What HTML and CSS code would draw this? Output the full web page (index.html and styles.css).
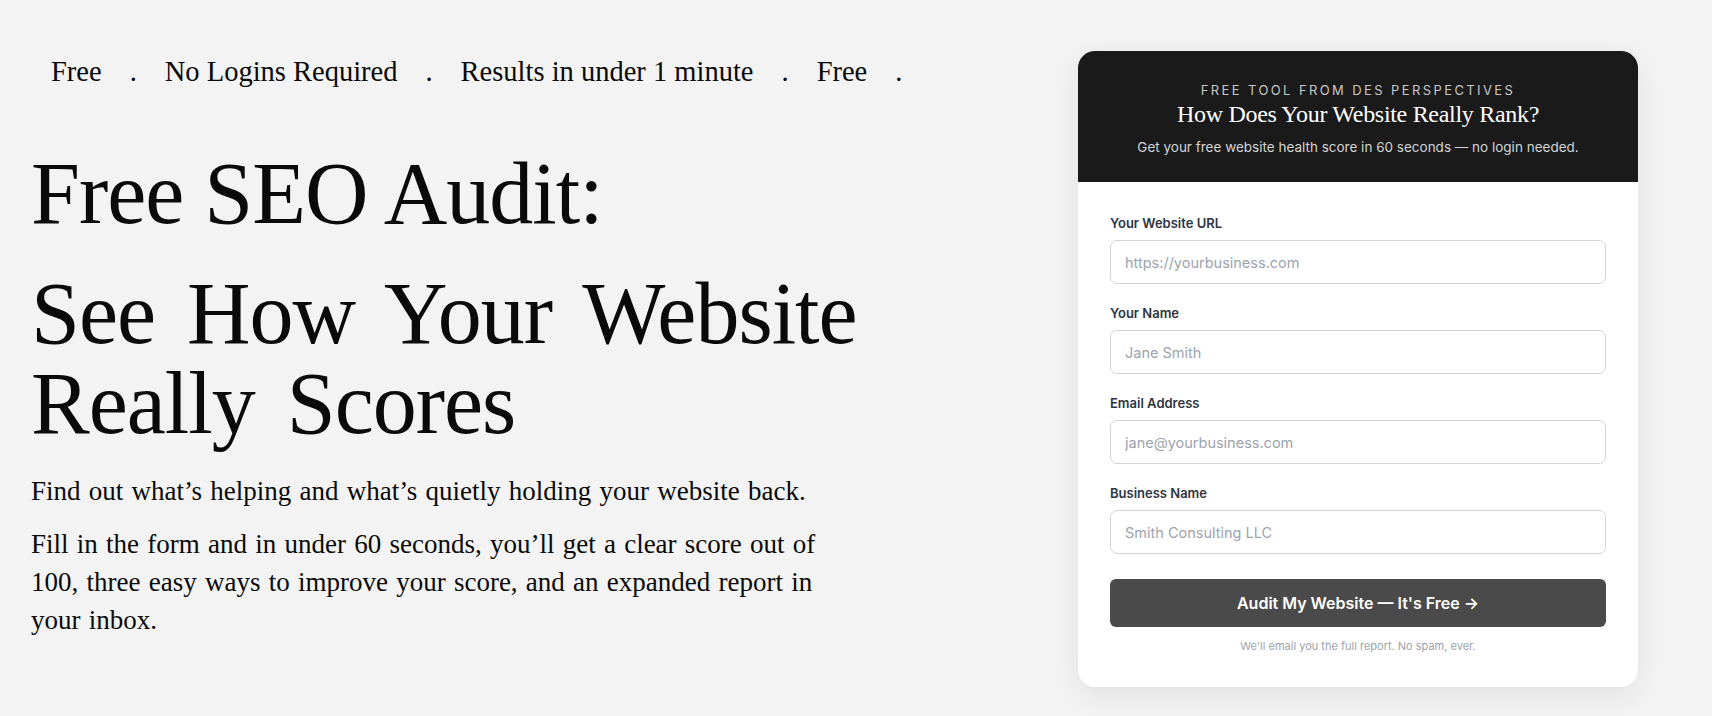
FILE: index.html
```html
<!DOCTYPE html>
<html lang="en">
<head>
<meta charset="utf-8">
<title>Free SEO Audit</title>
<link rel="stylesheet" href="styles.css">
</head>
<body>
<main class="page">
  <section class="intro">
    <div class="strip">
      <span>Free</span><span class="dot">.</span>
      <span>No Logins Required</span><span class="dot">.</span>
      <span>Results in under 1 minute</span><span class="dot">.</span>
      <span>Free</span><span class="dot">.</span>
    </div>
    <h1 class="title">Free SEO Audit:</h1>
    <h2 class="subtitle">See How Your Website Really Scores</h2>
    <p class="lead">Find out what’s helping and what’s quietly holding your website back.</p>
    <p class="lead">Fill in the form and in under 60 seconds, you’ll get a clear score out of 100, three easy ways to improve your score, and an expanded report in your inbox.</p>
  </section>
  <aside class="card">
    <header class="card-head">
      <div class="eyebrow">FREE TOOL FROM DES PERSPECTIVES</div>
      <div class="card-title">How Does Your Website Really Rank?</div>
      <div class="card-sub">Get your free website health score in 60 seconds — no login needed.</div>
    </header>
    <form class="card-body">
      <label class="field">
        <span class="label">Your Website URL</span>
        <input class="input" type="text" placeholder="https://yourbusiness.com">
      </label>
      <label class="field">
        <span class="label">Your Name</span>
        <input class="input" type="text" placeholder="Jane Smith">
      </label>
      <label class="field">
        <span class="label">Email Address</span>
        <input class="input" type="text" placeholder="jane@yourbusiness.com">
      </label>
      <label class="field">
        <span class="label">Business Name</span>
        <input class="input" type="text" placeholder="Smith Consulting LLC">
      </label>
      <button class="btn" type="button">Audit My Website — It's Free →</button>
      <p class="note">We'll email you the full report. No spam, ever.</p>
    </form>
  </aside>
</main>
</body>
</html>
```
FILE: styles.css
```css
* { box-sizing: border-box; }
html, body { margin: 0; padding: 0; }
body {
  background: #f3f3f3;
  color: #0a0a0a;
  font-family: "Liberation Serif", "Times New Roman", serif;
}
.page {
  display: flex;
  align-items: flex-start;
  justify-content: space-between;
  padding: 51px 74px 0 31px;
  height: 716px;
  overflow: hidden;
}
.intro { flex: 1; min-width: 0; }
.strip {
  display: flex;
  gap: 28px;
  padding-left: 20px;
  font-size: 28.5px;
  line-height: 42px;
  white-space: nowrap;
}
.title, .subtitle {
  margin: 0;
  font-weight: 400;
  font-size: 88px;
  line-height: 90px;
}
.title { margin-top: 56px; letter-spacing: -1px; }
.subtitle {
  margin-top: 30px;
  max-width: 900px;
  letter-spacing: -1px;
  word-spacing: 11px;
}
.lead {
  margin: 23px 0 0;
  font-size: 27px;
  line-height: 38px;
  word-spacing: 1.5px;
  max-width: 825px;
}
.lead + .lead { margin-top: 15px; }

.card {
  width: 560px;
  flex: none;
  background: #fff;
  border-radius: 17px;
  overflow: hidden;
  box-shadow: 0 8px 30px rgba(0,0,0,0.08);
}
.card-head {
  background: #1a1a1a;
  color: #fff;
  text-align: center;
  padding: 30px 20px 24px;
}
.eyebrow {
  font-family: Inter, "Liberation Sans", sans-serif;
  font-size: 13px;
  line-height: 18px;
  letter-spacing: 2.4px;
  color: #c8c8c8;
}
.card-title {
  font-size: 24px;
  line-height: 30px;
  letter-spacing: -0.3px;
  color: #fff;
}
.card-sub {
  margin-top: 8px;
  font-family: Inter, "Liberation Sans", sans-serif;
  font-size: 13.5px;
  line-height: 21px;
  color: #d4d4d4;
}
.card-body {
  display: flex;
  flex-direction: column;
  margin: 0;
  padding: 32px 32px 33px;
  font-family: Inter, "Liberation Sans", sans-serif;
}
.field { display: block; margin-bottom: 20px; }
.label {
  display: block;
  font-size: 13px;
  font-weight: 600;
  line-height: 18px;
  color: #2f3542;
  margin-bottom: 8px;
}
.input {
  display: block;
  width: 100%;
  height: 44px;
  border: 1px solid #d1d5db;
  border-radius: 7px;
  padding: 0 14px;
  font-family: Inter, "Liberation Sans", sans-serif;
  font-size: 14.5px;
  color: #111;
  background: #fff;
  outline: none;
}
.input::placeholder { color: #9ca3af; }
.btn {
  display: block;
  width: 100%;
  height: 48px;
  margin-top: 5px;
  border: 0;
  border-radius: 6px;
  background: #4a4a4a;
  color: #fff;
  font-family: Inter, "Liberation Sans", sans-serif;
  font-size: 16px;
  font-weight: 600;
}
.note {
  margin: 11px 0 0;
  text-align: center;
  font-size: 11px;
  line-height: 16px;
  color: #9ca3af;
}
```
